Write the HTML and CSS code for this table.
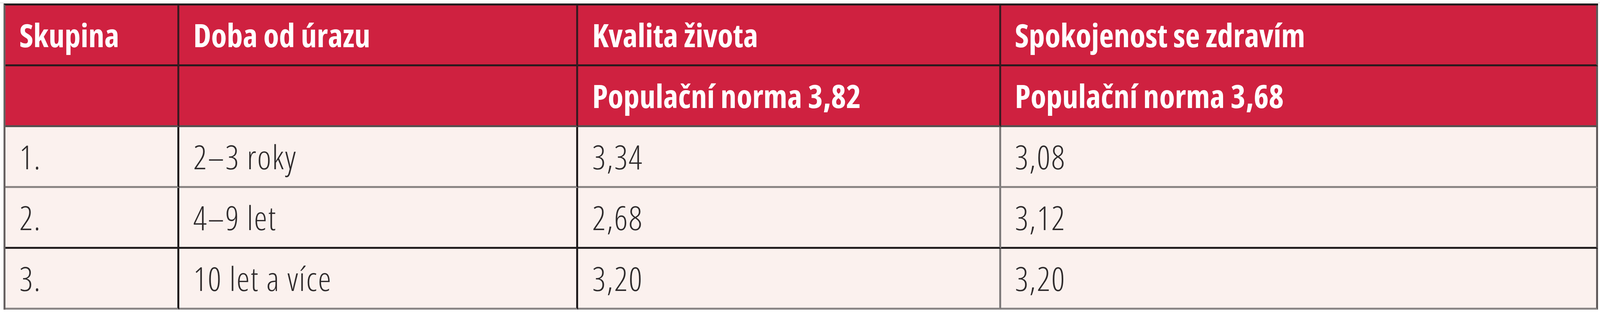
FILE: index.html
```html
<!DOCTYPE html>
<html lang="cs">
<head>
<meta charset="utf-8">
<title>Tabulka</title>
<link rel="stylesheet" href="styles.css">
</head>
<body>
<div class="page">
<table class="data">
  <colgroup>
    <col class="c1"><col class="c2"><col class="c3"><col class="c4">
  </colgroup>
  <thead>
    <tr class="h1">
      <th>Skupina</th><th>Doba od úrazu</th><th>Kvalita života</th><th>Spokojenost se zdravím</th>
    </tr>
    <tr class="h2">
      <th></th><th></th><th>Populační norma 3,82</th><th>Populační norma 3,68</th>
    </tr>
  </thead>
  <tbody>
    <tr class="r1"><td>1.</td><td>2–3 roky</td><td class="lt">3,34</td><td class="lt">3,08</td></tr>
    <tr class="r2"><td>2.</td><td>4–9 let</td><td class="lt">2,68</td><td class="lt">3,12</td></tr>
    <tr class="r3"><td>3.</td><td>10 let a více</td><td class="lt">3,20</td><td class="lt">3,20</td></tr>
  </tbody>
</table>
</div>
</body>
</html>
```
FILE: styles.css
```css
html, body {
  margin: 0;
  padding: 0;
  background: #ffffff;
}
.page {
  padding: 9px 5px 10px 9px;
  background: linear-gradient(#ffffff 0, #ffffff 5px, #eeeeee 5px, #eeeeee 9px, #ffffff 9px);
}
.data {
  width: 100%;
  box-sizing: border-box;
  border-collapse: separate;
  border-spacing: 0;
  table-layout: fixed;
  border-top: 5px solid #231c1e;
  border-left: 5px solid #676262;
  font-family: "Open Sans", "Liberation Sans", sans-serif;
  font-size: 82px;
  line-height: 82px;
  font-stretch: 100%;
}
.c1 { width: 10.92%; }
.c2 { width: 25.05%; }
.c3 { width: 26.54%; }
.c4 { width: 37.49%; }

.data th, .data td {
  box-sizing: border-box;
  padding: 34px 10px 35px 0.865vw;
  text-align: left;
  vertical-align: middle;
  white-space: nowrap;
  overflow: hidden;
  border-right: 5px solid #231c1e;
  border-bottom: 5px solid #231c1e;
}
.data th {
  background: #cf2140;
  color: #ffffff;
  font-weight: 700;
  border-right-color: #3a1a21;
  border-bottom-color: #2b1a1e;
}
.data tr.h2 th { border-bottom-color: #555050; }

.data td {
  background: #fbf1ee;
  color: #2f2b2c;
  font-weight: 300;
  font-size: 85px;
  border-right-color: #1f1b1c;
}
.data td.lt { border-right-color: #7f7b7b; }
.data tr.r1 td { border-bottom-color: #8a8584; }
.data tr.r2 td { border-bottom-color: #221f20; }
.data tr.r3 td { border-bottom-color: #8b8787; }
.data tr > :last-child { border-right-color: #5f5a5a; }

@media (max-width: 4500px) {
  .data th { font-stretch: 84%; }
  .data td { font-stretch: 87.5%; letter-spacing: 0.03em; }
}
```
